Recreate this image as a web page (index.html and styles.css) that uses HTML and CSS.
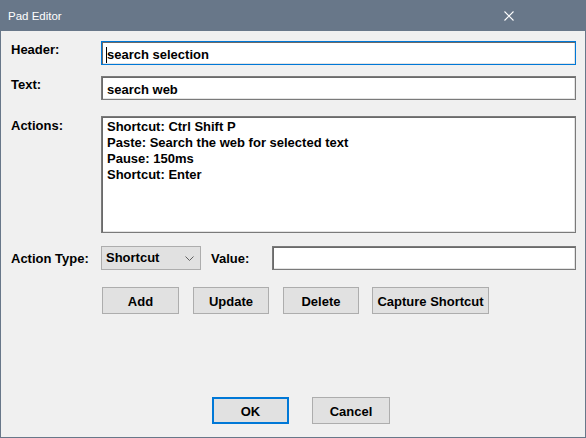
FILE: index.html
```html
<!DOCTYPE html>
<html>
<head>
<meta charset="utf-8">
<link rel="stylesheet" href="styles.css">
</head>
<body>
<div class="window">
  <div class="titlebar">
    <span class="title">Pad Editor</span>
    <svg class="close" width="10" height="10" viewBox="0 0 10 10"><path d="M0.5 0.5 L9.5 9.5 M9.5 0.5 L0.5 9.5" stroke="#ffffff" stroke-width="1.1" fill="none"/></svg>
  </div>
  <div class="content">
    <div class="row row-header">
      <div class="label">Header:</div>
      <div class="field focused"><span class="caret"></span>search selection</div>
    </div>
    <div class="row row-text">
      <div class="label">Text:</div>
      <div class="field">search web</div>
    </div>
    <div class="row row-actions">
      <div class="label label-actions">Actions:</div>
      <div class="field list">
        <div>Shortcut: Ctrl Shift P</div>
        <div>Paste: Search the web for selected text</div>
        <div>Pause: 150ms</div>
        <div>Shortcut: Enter</div>
      </div>
    </div>
    <div class="row row-type">
      <div class="label label-mid">Action Type:</div>
      <div class="select">
        <span>Shortcut</span>
        <svg class="chev" width="9" height="5" viewBox="0 0 9 5"><path d="M0.5 0.5 L4.5 4.5 L8.5 0.5" stroke="#606060" stroke-width="1" fill="none"/></svg>
      </div>
      <div class="label-value">Value:</div>
      <div class="field value"></div>
    </div>
    <div class="buttons">
      <div class="btn w77">Add</div>
      <div class="btn w76">Update</div>
      <div class="btn w76">Delete</div>
      <div class="btn capture">Capture Shortcut</div>
    </div>
    <div class="dialog-buttons">
      <div class="btn ok">OK</div>
      <div class="btn cancel">Cancel</div>
    </div>
  </div>
</div>
</body>
</html>
```
FILE: styles.css
```css
html, body {
  margin: 0;
  padding: 0;
  background: #f0f0f0;
}
.window {
  width: 586px;
  height: 438px;
  box-sizing: border-box;
  border: 1px solid #687789;
  border-top: none;
  background: #f0f0f0;
  font-family: "Liberation Sans", Arial, sans-serif;
  font-weight: bold;
  font-size: 13px;
  color: #000;
}
.titlebar {
  height: 31px;
  background: #687789;
  display: flex;
  align-items: center;
  margin: 0 -1px;
  padding: 0 72px 0 8px;
}
.title {
  font-family: "Liberation Sans", Arial, sans-serif;
  font-weight: normal;
  font-size: 11.5px;
  color: #ffffff;
  flex: 1;
  line-height: 14px;
  margin-top: 1px;
}
.close {
  display: block;
  margin-top: 1px;
}
.content {
  padding: 10px 9px 0 10px;
}
.row {
  display: flex;
  align-items: flex-start;
  line-height: 16px;
}
.label {
  width: 90px;
  flex: none;
  padding-top: 1px;
}
.row-header { margin-bottom: 11px; }
.row-text { margin-bottom: 16px; }
.row-actions { margin-bottom: 13px; }
.row-type { margin-bottom: 17px; align-items: center; }
.label-actions { padding-top: 2px; }
.label-mid { padding-top: 2px; }
.field {
  flex: 1;
  height: 24px;
  box-sizing: border-box;
  border: 1px solid #7a7a7a;
  background: #ffffff;
  box-shadow: inset 1px 1px 0 #6a6a6a, inset -1px -1px 0 #e3e3e3;
  padding: 4px 4px 0 5px;
  line-height: 16px;
  white-space: nowrap;
  overflow: hidden;
  display: flex;
  align-items: center;
}
.field.focused {
  border-color: #0078d7;
  padding-left: 4px;
}
.caret {
  display: inline-block;
  width: 1px;
  height: 16px;
  background: #000;
  align-self: center;
  margin-top: -1px;
}
.field.list {
  height: 117px;
  display: block;
  padding: 2px 4px 0 5px;
}
.select {
  width: 100px;
  height: 24px;
  box-sizing: border-box;
  background: #e1e1e1;
  border: 1px solid #adadad;
  display: flex;
  align-items: center;
  padding: 0 6px 0 4px;
  margin-right: 10px;
  flex: none;
}
.select span { flex: 1; margin-top: -1px; }
.chev { display: block; margin-top: 1px; }
.label-value {
  width: 61px;
  flex: none;
  padding-top: 2px;
}
.field.value { height: 24px; }
.buttons {
  display: flex;
  padding-left: 91px;
  margin-bottom: 83px;
}
.btn {
  height: 27px;
  box-sizing: border-box;
  background: #e1e1e1;
  border: 1px solid #adadad;
  display: flex;
  align-items: center;
  justify-content: center;
  line-height: 16px;
  padding-top: 2px;
  flex: none;
}
.w77 { width: 77px; margin-right: 14px; }
.w76 { width: 76px; margin-right: 14px; }
.capture { width: 117px; margin-left: -1px; }
.dialog-buttons {
  display: flex;
  padding-left: 201px;
}
.ok {
  width: 77px;
  border: 2px solid #0078d7;
  margin-right: 23px;
}
.cancel {
  width: 78px;
}
```
